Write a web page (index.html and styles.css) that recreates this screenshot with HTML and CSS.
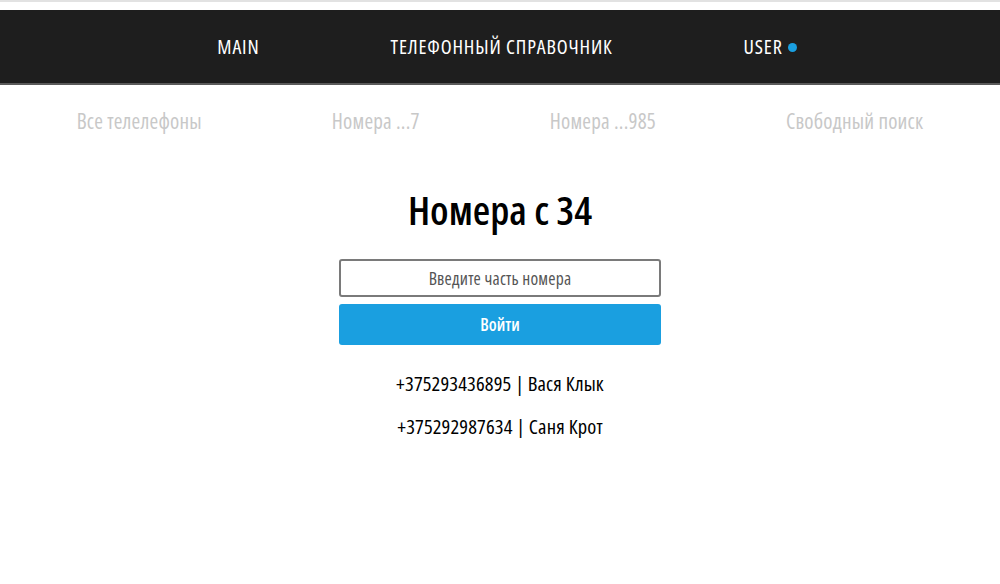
FILE: index.html
```html
<!DOCTYPE html>
<html lang="ru">
<head>
<meta charset="utf-8">
<title>Телефонный справочник</title>
<link rel="stylesheet" href="styles.css">
</head>
<body>
<div class="topline"></div>
<header class="header">
  <nav class="mainnav">
    <a class="mainnav__item" href="#">MAIN</a>
    <a class="mainnav__item" href="#">ТЕЛЕФОННЫЙ СПРАВОЧНИК</a>
    <a class="mainnav__item mainnav__user" href="#">USER<span class="dot"></span></a>
  </nav>
</header>
<nav class="subnav">
  <a class="subnav__item" href="#">Все телелефоны</a>
  <a class="subnav__item" href="#">Номера ...7</a>
  <a class="subnav__item" href="#">Номера ...985</a>
  <a class="subnav__item" href="#">Свободный поиск</a>
</nav>
<main class="content">
  <h1 class="title">Номера с 34</h1>
  <form class="search">
    <input class="search__input" type="text" placeholder="Введите часть номера">
    <button class="search__btn" type="button">Войти</button>
  </form>
  <ul class="results">
    <li class="results__item">+375293436895 | Вася Клык</li>
    <li class="results__item">+375292987634 | Саня Крот</li>
  </ul>
</main>
</body>
</html>
```

FILE: styles.css
```css
* { box-sizing: border-box; }
html, body { margin: 0; padding: 0; background: #fff; }
body {
  font-family: "Open Sans", "DejaVu Sans Condensed", sans-serif;
  font-stretch: 75%;
  font-weight: 500;
  color: #000;
}
.topline {
  height: 10px;
  border-top: 2px solid #e2e2e2;
}
.header {
  height: 75px;
  background: #1e1e1e;
  border-bottom: 2px solid #5a5a5a;
}
.mainnav {
  height: 73px;
  display: flex;
  justify-content: center;
  align-items: center;
  gap: 131px;
}
.mainnav__item {
  color: #fff;
  text-decoration: none;
  font-size: 20px;
  letter-spacing: 0.85px;
}
.mainnav__user {
  position: relative;
}
.dot {
  position: absolute;
  left: calc(100% + 5px);
  top: 50%;
  margin-top: -4px;
  width: 9px;
  height: 9px;
  border-radius: 50%;
  background: #1a9fe0;
}
.subnav {
  display: flex;
  justify-content: center;
  gap: 130px;
  padding-top: 22px;
  height: 74px;
}
.subnav__item {
  color: #c8c8c8;
  text-decoration: none;
  font-size: 21px;
  letter-spacing: 0.2px;
}
.content {
  display: flex;
  flex-direction: column;
  align-items: center;
}
.title {
  margin: 29px 0 0;
  font-size: 40px;
  font-weight: 600;
  line-height: 44px;
}
.search {
  margin-top: 27px;
  width: 322px;
  display: flex;
  flex-direction: column;
  gap: 7px;
}
.search__input {
  height: 38px;
  border: 2px solid #7a7a7a;
  border-radius: 3px;
  text-align: center;
  font-family: inherit;
  font-stretch: inherit;
  font-weight: inherit;
  font-size: 17.5px;
  letter-spacing: 0.2px;
  color: #555;
}
.search__input::placeholder { color: #555; }
.search__btn {
  height: 41px;
  border: 0;
  border-radius: 3px;
  background: #1a9fe0;
  color: #fff;
  font-family: inherit;
  font-stretch: inherit;
  font-size: 17px;
  font-weight: 600;
}
.results {
  list-style: none;
  margin: 26px 0 0;
  padding: 0;
  display: flex;
  flex-direction: column;
  gap: 19px;
}
.results__item {
  font-size: 20.5px;
  letter-spacing: 0.15px;
  line-height: 24px;
  text-align: center;
}
```
